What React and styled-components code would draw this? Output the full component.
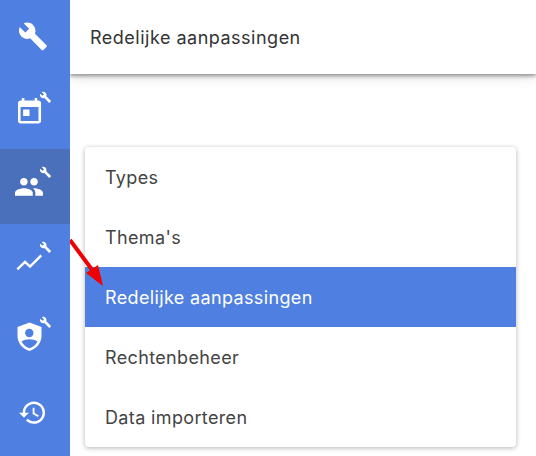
import React from 'react'
import styled, { createGlobalStyle } from 'styled-components'

const GlobalStyle = createGlobalStyle`
  html, body {
    margin: 0;
    padding: 0;
    background: #fff;
  }
  body {
    font-family: Inter, "Open Sans", sans-serif;
    overflow: hidden;
  }
`

const Page = styled.div`
  position: relative;
  display: flex;
  width: 536px;
  height: 456px;
  overflow: hidden;
`

const Sidebar = styled.nav`
  flex: 0 0 70px;
  z-index: 1;
  display: flex;
  flex-direction: column;
  margin-top: -1px;
  background: #4f7fe0;
`

const NavItem = styled.div`
  box-sizing: border-box;
  flex: 0 0 75px;
  display: flex;
  align-items: flex-start;
  justify-content: center;
  padding-top: 18px;
  background: ${(p) => (p.$active ? '#4a70bb' : 'transparent')};
  color: #fff;

  svg {
    overflow: visible;
  }
`

const Main = styled.main`
  flex: 1;
  display: flex;
  flex-direction: column;
  min-width: 0;
`

const Header = styled.header`
  flex: 0 0 74px;
  display: flex;
  align-items: center;
  padding-left: 20px;
  background: #fff;
  box-shadow: 0 2px 4px rgba(0, 0, 0, 0.4), 0 4px 12px rgba(0, 0, 0, 0.1);
  font-size: 18px;
  letter-spacing: 0.5px;
  color: #333;
`

const Menu = styled.ul`
  list-style: none;
  margin: 73px 20px 0 15px;
  padding: 0;
  background: #fff;
  border-radius: 4px;
  box-shadow: 0 1px 5px rgba(0, 0, 0, 0.3);
  overflow: hidden;
`

const MenuItem = styled.li`
  height: 60px;
  display: flex;
  align-items: center;
  padding-left: 20px;
  font-size: 18px;
  letter-spacing: 0.36px;
  color: ${(p) => (p.$active ? '#fff' : '#444')};
  background: ${(p) => (p.$active ? '#4f7fe0' : 'transparent')};
`

const Arrow = styled.svg`
  position: absolute;
  left: 60px;
  top: 230px;
`

const wrench =
  'M22.7 19l-9.1-9.1c.9-2.3.4-5-1.5-6.9-2-2-5-2.4-7.4-1.3L9 6 6 9 1.6 4.7C.4 7.1.9 10.1 2.9 12.1c1.9 1.9 4.6 2.4 6.9 1.5l9.1 9.1c.4.4 1 .4 1.4 0l2.3-2.3c.5-.4.5-1.1.1-1.4z'

// small wrench in the top right corner of most icons
const SmallWrench = () => (
  <g transform="translate(24.5 -0.7) scale(0.5)">
    <path d={wrench} fill="currentColor" />
  </g>
)

const Icon = ({ children }) => (
  <svg width="40" height="40" viewBox="0 0 40 40" fill="currentColor">
    {children}
  </svg>
)

const icons = [
  <Icon>
    <g transform="translate(2.7 4.1) scale(1.27)">
      <path d={wrench} />
    </g>
  </Icon>,
  <Icon>
    <g transform="translate(-0.84 4.7) scale(1.28)">
      <path d="M19 3h-1V1h-2v2H8V1H6v2H5c-1.11 0-1.99.9-1.99 2L3 19c0 1.1.89 2 2 2h14c1.1 0 2-.9 2-2V5c0-1.1-.9-2-2-2zm0 16H5V8h14v11zM7 10h5v5H7z" />
    </g>
    <SmallWrench />
  </Icon>,
  <Icon>
    <g transform="translate(-1.27 4.65) scale(1.27)">
      <path d="M16 11c1.66 0 2.99-1.34 2.99-3S17.66 5 16 5c-1.66 0-3 1.34-3 3s1.34 3 3 3zm-8 0c1.66 0 2.99-1.34 2.99-3S9.66 5 8 5C6.34 5 5 6.34 5 8s1.34 3 3 3zm0 2c-2.33 0-7 1.17-7 3.5V19h14v-2.5c0-2.33-4.67-3.5-7-3.5zm8 0c-.29 0-.62.02-.97.05 1.16.84 1.97 1.97 1.97 3.45V19h6v-2.5c0-2.33-4.67-3.5-7-3.5z" />
    </g>
    <SmallWrench />
  </Icon>,
  <Icon>
    <polyline points="2.300,27.300 10,20 15,24.700 26.300,13.300" fill="none" stroke="currentColor" strokeWidth="2.400" />
    <SmallWrench />
  </Icon>,
  <Icon>
    <path
      fillRule="evenodd"
      d="M14.500 5.500l12 4.500v9c0 7-5.200 13-12 15-6.800-2-12-8-12-15v-9zM14.300 11.800a4.200 4.200 0 1 0 0 8.400 4.200 4.200 0 0 0 0-8.400zM6.500 24.500c1.700 3.200 4.500 5.600 8 6.700 3.500-1.100 6.300-3.500 8-6.700-2.100-1.500-5.100-2.300-8-2.300s-5.900.8-8 2.300z"
    />
    <SmallWrench />
  </Icon>,
  <Icon>
    <g transform="translate(2.760 5.800) scale(1.240)">
      <path d="M13 3c-4.970 0-9 4.030-9 9H1l3.890 3.890.07.14L9 12H6c0-3.870 3.130-7 7-7s7 3.130 7 7-3.130 7-7 7c-1.930 0-3.680-.790-4.940-2.060l-1.420 1.420C8.270 19.990 10.510 21 13 21c4.970 0 9-4.030 9-9s-4.030-9-9-9zm-1 5v5l4.280 2.540.720-1.210-3.500-2.080V8H12z" />
    </g>
  </Icon>,
]

const items = ['Types', "Thema's", 'Redelijke aanpassingen', 'Rechtenbeheer', 'Data importeren']

export default function App() {
  return (
    <Page>
      <GlobalStyle />
      <Sidebar>
        {icons.map((icon, i) => (
          <NavItem key={i} $active={i === 2}>
            {icon}
          </NavItem>
        ))}
      </Sidebar>
      <Main>
        <Header>Redelijke aanpassingen</Header>
        <Menu>
          {items.map((item, i) => (
            <MenuItem key={item} $active={i === 2}>
              {item}
            </MenuItem>
          ))}
        </Menu>
      </Main>
      <Arrow width="60" height="70" viewBox="0 0 60 70">
        <line x1="10" y1="10" x2="33" y2="41" stroke="#f00000" strokeWidth="4" />
        <polygon points="43,56 26,43 38,35" fill="#f00000" />
      </Arrow>
    </Page>
  )
}
